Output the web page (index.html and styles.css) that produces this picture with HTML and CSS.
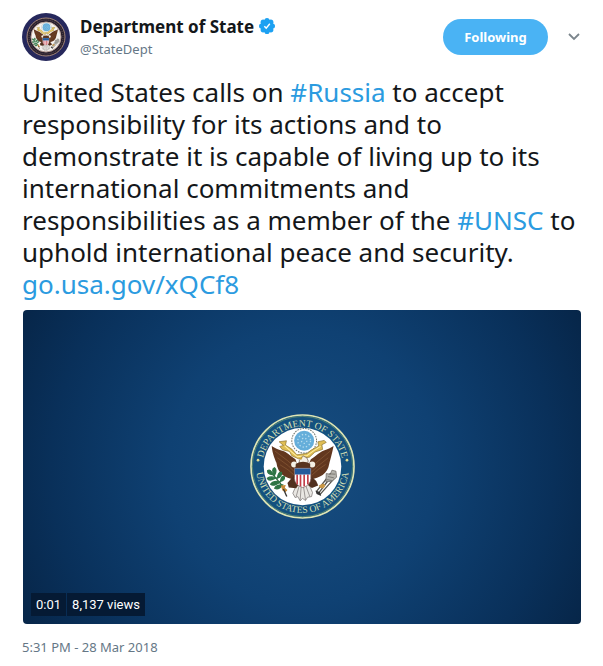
FILE: index.html
```
<!doctype html>
<html lang="en">

<head>
	<meta charset="utf-8">
	<meta name="viewport" content="width=device-width, initial-scale=1">
	<title>Department of State</title>
	<link rel="stylesheet" href="styles.css">
</head>

<body>
	<!-- shared eagle drawing, used by the avatar and the video -->
	<svg class="defs" width="0" height="0" aria-hidden="true">
		<defs>
			<symbol id="eagle" viewBox="0 0 375 375">
				<!-- glory -->
				<circle cx="195" cy="109" r="37" fill="#fff" stroke="#75796f" stroke-width="3" stroke-dasharray="5 3" />
				<circle cx="195" cy="109" r="30" fill="#65aeda" />
				<g fill="none" stroke="#b4dcef" stroke-width="4" stroke-dasharray="4 6">
					<circle cx="195" cy="109" r="19" />
					<circle cx="195" cy="109" r="8" />
				</g>
				<!-- tail -->
				<path d="M174 236L161 266L168 279L176 276L183 289L190 281L199 288L205 278L217 276L220 264L208 236Z" fill="#e9e7e3" stroke="#706a69" stroke-width="2" />
				<path d="M180 244L171 276M186 246L183 286M193 246L199 286M200 244L212 276" stroke="#77706f" stroke-width="2" />
				<!-- wings -->
				<path d="M98 125C100 148 106 160 112 175C116 208 138 222 165 224L176 185L169 164C151 153 144 143 129 139C116 136 108 131 98 125Z" fill="#62371f" />
				<path d="M283 125C278 149 274 163 270 178C266 208 240 222 215 224L206 185L215 164C232 155 239 143 254 138C266 134 274 131 283 125Z" fill="#62371f" />
				<path d="M108 140L146 169L167 188M115 160L148 184L166 202M123 181L147 196L164 211M274 139L239 168L216 188M267 160L237 184L216 203M259 180L237 195L219 211" fill="none" stroke="#8a5c38" stroke-width="2" />
				<!-- legs -->
				<path d="M166 211L145 235L149 249L171 251L181 237L181 211Z" fill="#51301f" />
				<path d="M210 210L231 229L237 243L218 250L204 240Z" fill="#51301f" />
				<!-- scroll -->
				<path d="M120 112L142 109L139 122L158 134L173 151L203 147L216 137L238 125L236 112L255 108L261 114L248 121L250 135L227 143L211 158L178 163L158 154L151 141L130 136L122 126L133 123Z" fill="#dfbd53" stroke="#89702f" stroke-width="2" />
				<path d="M137 124L158 143L175 157L204 153L225 138L244 126" fill="none" stroke="#fff0a2" stroke-width="3" />
				<!-- head -->
				<circle cx="165" cy="180" r="9" fill="#f4f0e5" />
				<circle cx="219" cy="180" r="9" fill="#f4f0e5" />
				<path d="M178 187L181 167L191 154L203 160L207 169L204 187Z" fill="#f4f0e5" stroke="#665143" stroke-width="2" />
				<path d="M191 157L180 163L187 166Z" fill="#d1a532" />
				<path d="M170 178Q192 165 213 178L213 192L169 192Z" fill="#58341f" />
				<!-- shield -->
				<path d="M166 191H215V222Q215 241 191 249Q166 241 166 222Z" fill="#fff" stroke="#7e5a58" stroke-width="2" />
				<path d="M174 210V239M184 210V245M195 210V245M206 210V239" stroke="#c33e49" stroke-width="5" />
				<path d="M167 192H214V210H167Z" fill="#245a9b" />
				<!-- olive branch -->
				<path d="M93 200C107 216 122 235 142 259" fill="none" stroke="#35643e" stroke-width="4" />
				<path d="M100 210Q84 208 86 198Q95 193 100 210ZM106 213Q96 194 106 190Q115 197 106 213ZM111 220Q89 232 85 221Q95 214 111 220ZM115 221Q117 202 127 204Q129 215 115 221ZM123 232Q103 247 95 239Q102 228 123 232ZM124 230Q128 211 136 217Q137 228 124 230ZM130 241Q118 258 107 251Q112 240 130 241Z" fill="#2f7545" stroke="#2f7545" stroke-width="4" />
				<path d="M125 243L140 241L137 250L145 256L139 263L130 258Z" fill="#c68a39" />
				<path d="M133 253L143 276" stroke="#383634" stroke-width="4" />
				<!-- arrows -->
				<path d="M237 267L285 204M231 262L274 207M242 270L289 217" stroke="#59564f" stroke-width="4" />
				<path d="M261 207L273 209L278 197L290 200L292 218L278 230L260 232Z" fill="#b5b4ae" stroke="#635f5a" stroke-width="2" />
				<path d="M266 216L284 220M270 208L288 209M262 225L278 228" stroke="#625d59" stroke-width="2" />
				<path d="M229 258L242 262L246 274L232 268Z" fill="#333" />
				<path d="M239 243L252 237L259 243L253 251L243 250Z" fill="#ca9846" />
			</symbol>
		</defs>
	</svg>

	<article class="tweet">
		<header class="header">
			<a class="account" href="#">
				<svg class="avatar" viewBox="0 0 48 48" aria-hidden="true">
					<circle cx="24" cy="24" r="24" fill="#26285c" />
					<circle cx="24" cy="24" r="19" fill="#28202d" stroke="#a58678" stroke-width="1" />
					<circle cx="24" cy="24" r="17" fill="none" stroke="#65505a" stroke-width="1" stroke-dasharray="1 1" />
					<circle cx="24" cy="24" r="15" fill="#f6f3ef" stroke="#b9a098" stroke-width="1" />
					<use href="#eagle" x="-1" y="0" width="49" height="49" />
				</svg>
				<span class="names">
					<span class="name-row">
						<strong class="name">Department of State</strong>
						<svg class="verified" viewBox="0 0 16 16" role="img" aria-label="Verified account">
							<g fill="#1da1f2">
								<circle cx="8" cy="8" r="6" />
								<circle cx="8" cy="2.6" r="2.6" />
								<circle cx="11.8" cy="4.2" r="2.6" />
								<circle cx="13.4" cy="8" r="2.6" />
								<circle cx="11.8" cy="11.8" r="2.6" />
								<circle cx="8" cy="13.4" r="2.6" />
								<circle cx="4.2" cy="11.8" r="2.6" />
								<circle cx="2.6" cy="8" r="2.6" />
								<circle cx="4.2" cy="4.2" r="2.6" />
							</g>
							<path d="M5.3 8.2L7.2 10.1L10.8 5.7" fill="none" stroke="#fff" stroke-width="1.4" />
						</svg>
					</span>
					<span class="handle">@StateDept</span>
				</span>
			</a>
			<button class="follow" type="button">Following</button>
			<button class="more" type="button" aria-label="More">
				<svg class="caret" viewBox="0 0 12 8" aria-hidden="true">
					<path d="M1 1L6 6L11 1" fill="none" stroke="#7b858c" stroke-width="1.8" />
				</svg>
			</button>
		</header>

		<p class="text">United States calls on <a href="#">#Russia</a> to accept responsibility for its actions and to demonstrate it is capable of living up to its international commitments and responsibilities as a member of the <a href="#">#UNSC</a> to uphold international peace and security. <a href="#">go.usa.gov/xQCf8</a></p>

		<div class="video">
			<svg class="seal" viewBox="30 29 314 314" role="img" aria-label="Department of State seal">
				<defs>
					<path id="arcTop" d="M67 186A120 120 0 0 1 307 186" />
					<path id="arcBottom" d="M48 186A139 139 0 0 0 326 186" />
				</defs>
				<circle cx="187" cy="186" r="154" fill="#14517f" stroke="#dfe5b4" stroke-width="5" />
				<circle cx="187" cy="186" r="150" fill="none" stroke="#6f9b6d" stroke-width="2" />
				<circle cx="187" cy="186" r="116" fill="#fff" />
				<circle cx="54" cy="167" r="4" fill="#e2dc91" />
				<circle cx="320" cy="167" r="4" fill="#e2dc91" />
				<text class="ring-text"><textPath href="#arcTop" startOffset="50%" text-anchor="middle">DEPARTMENT OF STATE</textPath></text>
				<text class="ring-text"><textPath href="#arcBottom" startOffset="50%" text-anchor="middle">UNITED STATES OF AMERICA</textPath></text>
				<use href="#eagle" x="-3" y="0" width="375" height="375" />
			</svg>
			<div class="stats">
				<span class="stat">0:01</span>
				<span class="stat">8,137 views</span>
			</div>
		</div>

		<time class="date" datetime="2018-03-28T17:31">5:31 PM - 28 Mar 2018</time>
	</article>
</body>

</html>
```
FILE: styles.css
```
body {
	margin: 0;
	background: #fff;
	color: #14171a;
	font-family: "Noto Sans", "Open Sans", sans-serif;
}

a {
	color: #2b9be0;
	text-decoration: none;
}

button {
	border: 0;
	padding: 0;
	font-family: inherit;
	cursor: pointer;
}

.defs {
	position: absolute;
}

.tweet {
	padding: 13px 22px 8px;
}

.header {
	display: flex;
	align-items: center;
}

.account {
	display: flex;
	flex: 1;
	gap: 10px;
	color: inherit;
}

.avatar {
	width: 48px;
	height: 48px;
}

.names {
	display: flex;
	flex-direction: column;
}

.name-row {
	display: flex;
	align-items: center;
	gap: 5px;
	height: 26px;
}

.name {
	font-size: 17px;
	white-space: nowrap;
}

.verified {
	width: 16px;
	height: 16px;
}

.handle {
	color: #657786;
	font-size: 13px;
	line-height: 20px;
}

.follow {
	width: 105px;
	height: 36px;
	border-radius: 18px;
	background: #4ab3f4;
	color: #fff;
	font-size: 13px;
	font-weight: bold;
}

.more {
	display: flex;
	margin-left: 20px;
	padding-right: 1px;
	background: none;
}

.caret {
	width: 12px;
	height: 8px;
}

.text {
	margin: 15px 0 10px;
	font-size: 26px;
	line-height: 32px;
}

.video {
	position: relative;
	display: flex;
	align-items: center;
	justify-content: center;
	aspect-ratio: 16 / 9;
	margin-left: 1px;
	border-radius: 4px;
	background: radial-gradient(ellipse 60% 110%, #174d80 0%, #0f4173 40%, #09305a 75%, #062344 100%);
}

.seal {
	width: 105px;
	height: 105px;
}

.ring-text {
	fill: #d3dfb4;
	font-family: "Liberation Serif", serif;
	font-size: 29px;
}

.stats {
	position: absolute;
	left: 8px;
	bottom: 8px;
	display: flex;
	gap: 1px;
	color: #fff;
	font: 13px/23px Roboto, sans-serif;
}

.stat {
	padding: 0 5px;
	background: #051a34;
}

.date {
	display: block;
	margin-top: 13px;
	color: #657786;
	font-size: 13px;
	line-height: 20px;
}
```
